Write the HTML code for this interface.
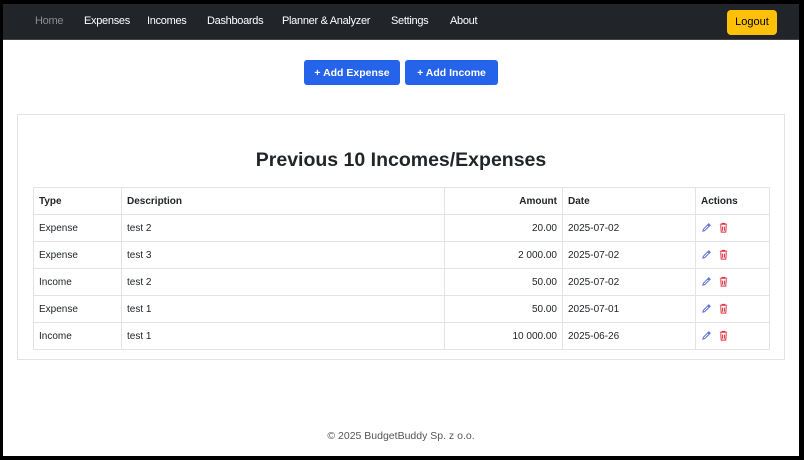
<!DOCTYPE html>
<html><head><style>
*{box-sizing:border-box;margin:0;padding:0}
html,body{width:804px;height:460px;background:#000;overflow:hidden;font-family:"Liberation Sans",sans-serif}
.page{position:absolute;left:3px;top:4px;width:796px;height:452px;background:#fff}
.nav{position:absolute;left:0;top:0;width:796px;height:36px;background:#212529;border-bottom:1px solid #444}
.nav a{position:absolute;top:11px;font-size:11px;letter-spacing:-0.3px;color:#fff;text-decoration:none}
.logout{position:absolute;left:724px;top:6px;width:50px;height:25px;background:#ffc107;border-radius:4px;font-size:11px;color:#000;text-align:center;line-height:25px}
.btn{position:absolute;top:56px;height:25px;background:#2563eb;color:#fff;border-radius:3px;font-size:10.5px;font-weight:bold;text-align:center;line-height:26px}
.card{position:absolute;left:14px;top:110px;width:768px;height:246px;border:1px solid #e3e3e3}
h2{position:absolute;left:0;width:100%;top:34px;text-align:center;font-size:19.5px;font-weight:bold;color:#212529}
table{position:absolute;left:15px;top:72px;width:737px;border-collapse:collapse;font-size:10px;color:#212529}
td,th{border:1px solid #e3e3e3;height:27px;padding:0 5px;text-align:left}
th{font-weight:bold}
.r{text-align:right}
td svg{vertical-align:middle;margin-right:6px}
.foot{position:absolute;left:0;width:100%;top:426px;text-align:center;font-size:10.5px;color:#555}
</style></head><body><div class="page">
<div class="nav">
<a style="left:32px;color:#8a8d91">Home</a><a style="left:81px">Expenses</a><a style="left:144px">Incomes</a><a style="left:204px">Dashboards</a><a style="left:279px">Planner &amp; Analyzer</a><a style="left:388px">Settings</a><a style="left:447px">About</a>
<div class="logout">Logout</div></div>
<div class="btn" style="left:301px;width:96px">+ Add Expense</div>
<div class="btn" style="left:402px;width:93px">+ Add Income</div>
<div class="card"><h2>Previous 10 Incomes/Expenses</h2>
<table>
<colgroup><col style="width:88px"><col style="width:323px"><col style="width:118px"><col style="width:133px"><col style="width:74px"></colgroup>
<tr><th>Type</th><th>Description</th><th class="r">Amount</th><th>Date</th><th>Actions</th></tr>
<tr><td>Expense</td><td>test 2</td><td class="r">20.00</td><td>2025-07-02</td><td><svg width="11" height="11" viewBox="0 0 12 12"><path d="M2 10L2.5 8 8.5 2 10 3.5 4 9.5Z M7.5 3L9 4.5" fill="none" stroke="#4a63d8" stroke-width="1"/></svg><svg width="11" height="11" viewBox="0 0 12 12"><path d="M2 2.5H10 M4.5 2.5V1.5H7.5V2.5 M3 3.5L3.5 11H8.5L9 3.5 M5 5V9.5 M7 5V9.5" fill="none" stroke="#dc3545" stroke-width="1.1"/></svg></td></tr>
<tr><td>Expense</td><td>test 3</td><td class="r">2 000.00</td><td>2025-07-02</td><td><svg width="11" height="11" viewBox="0 0 12 12"><path d="M2 10L2.5 8 8.5 2 10 3.5 4 9.5Z M7.5 3L9 4.5" fill="none" stroke="#4a63d8" stroke-width="1"/></svg><svg width="11" height="11" viewBox="0 0 12 12"><path d="M2 2.5H10 M4.5 2.5V1.5H7.5V2.5 M3 3.5L3.5 11H8.5L9 3.5 M5 5V9.5 M7 5V9.5" fill="none" stroke="#dc3545" stroke-width="1.1"/></svg></td></tr>
<tr><td>Income</td><td>test 2</td><td class="r">50.00</td><td>2025-07-02</td><td><svg width="11" height="11" viewBox="0 0 12 12"><path d="M2 10L2.5 8 8.5 2 10 3.5 4 9.5Z M7.5 3L9 4.5" fill="none" stroke="#4a63d8" stroke-width="1"/></svg><svg width="11" height="11" viewBox="0 0 12 12"><path d="M2 2.5H10 M4.5 2.5V1.5H7.5V2.5 M3 3.5L3.5 11H8.5L9 3.5 M5 5V9.5 M7 5V9.5" fill="none" stroke="#dc3545" stroke-width="1.1"/></svg></td></tr>
<tr><td>Expense</td><td>test 1</td><td class="r">50.00</td><td>2025-07-01</td><td><svg width="11" height="11" viewBox="0 0 12 12"><path d="M2 10L2.5 8 8.5 2 10 3.5 4 9.5Z M7.5 3L9 4.5" fill="none" stroke="#4a63d8" stroke-width="1"/></svg><svg width="11" height="11" viewBox="0 0 12 12"><path d="M2 2.5H10 M4.5 2.5V1.5H7.5V2.5 M3 3.5L3.5 11H8.5L9 3.5 M5 5V9.5 M7 5V9.5" fill="none" stroke="#dc3545" stroke-width="1.1"/></svg></td></tr>
<tr><td>Income</td><td>test 1</td><td class="r">10 000.00</td><td>2025-06-26</td><td><svg width="11" height="11" viewBox="0 0 12 12"><path d="M2 10L2.5 8 8.5 2 10 3.5 4 9.5Z M7.5 3L9 4.5" fill="none" stroke="#4a63d8" stroke-width="1"/></svg><svg width="11" height="11" viewBox="0 0 12 12"><path d="M2 2.5H10 M4.5 2.5V1.5H7.5V2.5 M3 3.5L3.5 11H8.5L9 3.5 M5 5V9.5 M7 5V9.5" fill="none" stroke="#dc3545" stroke-width="1.1"/></svg></td></tr>
</table></div>
<div class="foot">© 2025 BudgetBuddy Sp. z o.o.</div>
</div></body></html>
